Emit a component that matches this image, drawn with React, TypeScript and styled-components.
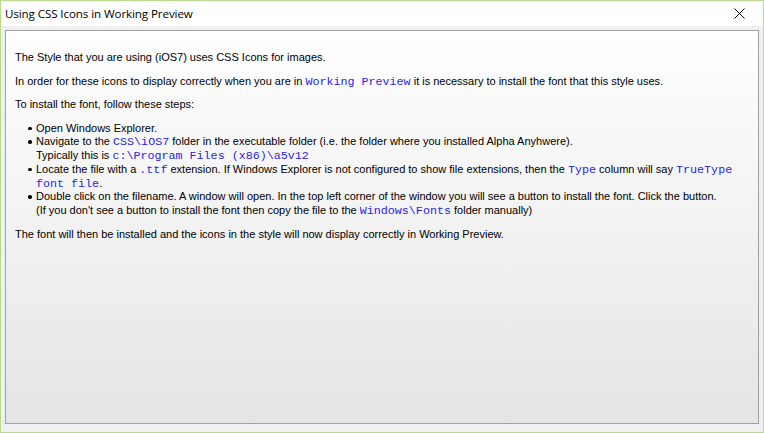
import React from "react";
import styled, { createGlobalStyle } from "styled-components";

const Global = createGlobalStyle`
  html, body { margin: 0; padding: 0; background: #ffffff; }
  body { font-family: "Liberation Sans", Arial, sans-serif; }
`;

const Window = styled.div`
  width: 764px;
  height: 433px;
  box-sizing: border-box;
  border: 1px solid #b9d98e;
  background: #f0f0f0;
  display: flex;
  flex-direction: column;
`;

const TitleBar = styled.div`
  height: 25px;
  background: #ffffff;
  display: flex;
  align-items: center;
  justify-content: space-between;
  padding: 0 0 0 4px;
  flex-shrink: 0;
`;

const Title = styled.span`
  font-family: "Open Sans", "Liberation Sans", sans-serif;
  font-size: 11.6px;
  color: #000;
  letter-spacing: -0.1px;
  margin-top: -1px;
`;

const CloseButton = styled.div`
  width: 46px;
  height: 25px;
  display: flex;
  align-items: center;
  justify-content: center;
  margin-right: 1px;
`;

const Body = styled.div`
  flex: 1;
  padding: 4px 4px 8px 4px;
  display: flex;
`;

const Panel = styled.div`
  flex: 1;
  border: 1px solid #a0a0a0;
  background: linear-gradient(to bottom, #ffffff 0%, #e5e5e5 100%);
  padding: 20px 10px 0 9px;
  font-family: "Liberation Sans", Arial, sans-serif;
  font-size: 11px;
  line-height: 13.75px;
  color: #000;
`;

const Para = styled.p`
  margin: 0 0 9.75px 0;
`;

const List = styled.ul`
  margin: 0 0 9.75px 0;
  padding: 0 0 0 21px;
  list-style: none;
`;

const Item = styled.li`
  position: relative;
  &::before {
    content: "";
    position: absolute;
    left: -8px;
    top: 5px;
    width: 3.5px;
    height: 3.5px;
    border-radius: 50%;
    background: #000;
  }
`;

const Code = styled.span`
  font-family: "Liberation Mono", "Courier New", monospace;
  font-size: 11.7px;
  color: #2a24ec;
  line-height: 8px;
`;

export default function App() {
  return (
    <>
      <Global />
      <Window>
        <TitleBar>
          <Title>Using CSS Icons in Working Preview</Title>
          <CloseButton>
            <svg width="11" height="11" viewBox="0 0 11 11">
              <path d="M0.5 0.5 L10.5 10.5 M10.5 0.5 L0.5 10.5" stroke="#000" strokeWidth="1" />
            </svg>
          </CloseButton>
        </TitleBar>
        <Body>
          <Panel>
            <Para>The Style that you are using (iOS7) uses CSS Icons for images.</Para>
            <Para>
              In order for these icons to display correctly when you are in <Code>Working Preview</Code> it is
              necessary to install the font that this style uses.
            </Para>
            <Para>To install the font, follow these steps:</Para>
            <List>
              <Item>Open Windows Explorer.</Item>
              <Item>
                Navigate to the <Code>CSS\iOS7</Code> folder in the executable folder (i.e. the folder where you
                installed Alpha Anyhwere).
                <br />
                Typically this is <Code>c:\Program Files (x86)\a5v12</Code>
              </Item>
              <Item>
                Locate the file with a <Code>.ttf</Code> extension. If Windows Explorer is not configured to show file
                extensions, then the <Code>Type</Code> column will say <Code>TrueType</Code>
                <br />
                <Code>font file</Code>.
              </Item>
              <Item>
                Double click on the filename. A window will open. In the top left corner of the window you will see a
                button to install the font. Click the button.
                <br />
                (If you don't see a button to install the font then copy the file to the <Code>Windows\Fonts</Code>{" "}
                folder manually)
              </Item>
            </List>
            <Para>The font will then be installed and the icons in the style will now display correctly in Working Preview.</Para>
          </Panel>
        </Body>
      </Window>
    </>
  );
}
